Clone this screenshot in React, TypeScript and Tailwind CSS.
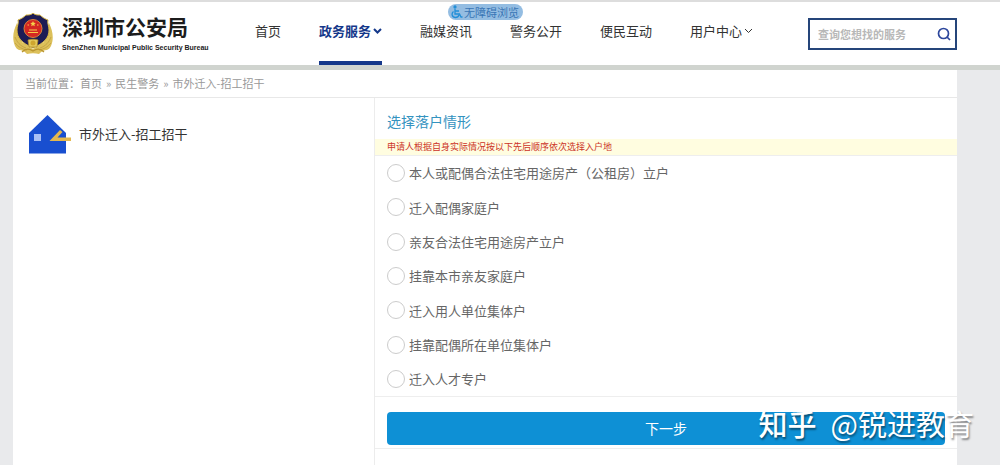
import React from "react";

type NavItem = { label: string; active?: boolean; menu?: boolean };

const NAV: NavItem[] = [
  { label: "首页" },
  { label: "政务服务", active: true, menu: true },
  { label: "融媒资讯" },
  { label: "警务公开" },
  { label: "便民互动" },
  { label: "用户中心", menu: true },
];

const OPTIONS = [
  "本人或配偶合法住宅用途房产（公租房）立户",
  "迁入配偶家庭户",
  "亲友合法住宅用途房产立户",
  "挂靠本市亲友家庭户",
  "迁入用人单位集体户",
  "挂靠配偶所在单位集体户",
  "迁入人才专户",
];

function Emblem() {
  return (
    <svg viewBox="0 0 40 42" className="h-[42px] w-10 shrink-0" aria-hidden="true">
      <path
        d="M4 10C0 18-1 26 2 33c1 2 2 3 4 4 3 0 5 1 8 4 4-1 8-1 12 0 3-3 5-4 8-4 2-1 3-2 4-4 3-7 2-15-2-23l-5 19-11 7-11-7z"
        fill="#dcc05a"
      />
      <path d="M2 24c2 5 5 9 11 11M2 30c3 4 7 6 12 7M38 24c-2 5-5 9-11 11M38 30c-3 4-7 6-12 7" fill="none" stroke="#c6a545" strokeWidth="1" />
      <path
        d="M20 0c2 2 4 2 7 2 2 2 5 4 8 5-1 3 1 6 1 10 0 8-5 13-16 18C9 30 4 25 4 17c0-4 2-7 1-10 3-1 6-3 8-5 3 0 5 0 7-2z"
        fill="#1d1c55"
        stroke="#d5b544"
        strokeWidth="1"
      />
      <circle cx="20" cy="15.500" r="9" fill="#d42722" stroke="#d9843a" strokeWidth="1" />
      <path d="m20 8 .8 1.8 2 .2-1.500 1.300.5 2-1.800-1-1.800 1 .5-2L17.200 10l2-.2z" fill="#f5d24a" />
      <path d="M14.500 12H16M24 12h1.500M16 17h8M15 19.500h10" stroke="#f5c94a" strokeWidth="1.200" />
      <path d="M15 27c2-1 8-1 10 0l-1 7h-8z" fill="#e3c95c" stroke="#b08a22" strokeWidth=".7" />
      <circle cx="20" cy="30" r="2.500" fill="#cfa62f" />
      <path d="M9 39c4-4 8-3 11-1 3-2 7-3 11 1" fill="none" stroke="#b8932f" strokeWidth="1.200" />
    </svg>
  );
}

function Chevron({ bold }: { bold?: boolean }) {
  return (
    <svg viewBox="0 0 9 8" className="h-2 w-[9px]" fill="none" stroke="currentColor" strokeWidth={bold ? 2 : 1} aria-hidden="true">
      <path d="m1 2 3.500 3.500L8 2" />
    </svg>
  );
}

function HouseIcon() {
  return (
    <svg viewBox="0 0 42 40" className="h-10 w-[42px] shrink-0" aria-hidden="true">
      <path d="M0 19 18.500 1 37 19v20.500H0z" fill="#194fd0" />
      <path d="M5 20h7v7H5z" fill="#a9c0f5" />
      <path d="m31 16 2.500 2-5 5.500H42V27H20.500z" fill="#e4b84e" />
    </svg>
  );
}

export default function App() {
  return (
    <div className="relative flex min-h-screen flex-col overflow-hidden bg-[#e9eaec] font-['Noto_Sans_CJK_SC',sans-serif] text-[13px]">
      <header className="relative flex h-[70px] items-start border-t-2 border-b-[5px] border-t-[#dddddd] border-b-[#d0d4cf] bg-white pr-[43px] pl-[13px]">
        <a href="#home" className="flex w-[242px] shrink-0 items-center gap-[9px] pt-[11px]">
          <Emblem />
          <span className="flex flex-col gap-1 whitespace-nowrap text-[#1c1c1c]">
            <span className="text-[21px] leading-6 font-bold">深圳市公安局</span>
            <span className="font-['Liberation_Sans',sans-serif] text-[7px] leading-3 font-bold">ShenZhen Municipal Public Security Bureau</span>
          </span>
        </a>

        <nav className="flex flex-1 gap-[38px] self-stretch">
          {NAV.map((n) => (
            <a
              key={n.label}
              href="#nav"
              className={
                n.active
                  ? "flex items-center gap-[2px] border-b-4 border-[#15388a] pb-px font-bold whitespace-nowrap text-[#15388a]"
                  : "flex items-center gap-[2px] border-b-4 border-transparent pb-px whitespace-nowrap text-[#333333]"
              }
            >
              {n.label}
              {n.menu && <Chevron bold={n.active} />}
            </a>
          ))}
        </nav>

        <form className="mt-4 flex h-8 w-[149px] shrink-0 items-center border-2 border-[#25457a] pr-1 pl-2" onSubmit={(e) => e.preventDefault()}>
          <input
            type="search"
            aria-label="查询您想找的服务"
            placeholder="查询您想找的服务"
            className="w-full min-w-0 flex-1 bg-transparent text-[11px] font-bold outline-none placeholder:text-[#b8b8b8]"
          />
          <button type="submit" aria-label="搜索" className="text-[#2d479c]">
            <svg viewBox="0 0 14 14" className="h-[14px] w-[14px]" fill="none" stroke="currentColor" strokeWidth="1.700" aria-hidden="true">
              <circle cx="6.500" cy="6.500" r="5" />
              <path d="m10 10 3 3" />
            </svg>
          </button>
        </form>

        <a
          href="#accessible"
          className="absolute top-[2px] left-[448px] flex h-4 w-[75px] items-center gap-px rounded-full bg-[#94bde2] pl-[3px] text-[11px] leading-4 whitespace-nowrap text-[#3975b5]"
        >
          <svg viewBox="0 0 12 14" className="h-[14px] w-3" fill="none" stroke="#218fd8" strokeWidth="1.300" aria-hidden="true">
            <circle cx="4" cy="2" r="1" fill="#218fd8" />
            <path d="M4 4v5h4.500l1.500 3h1.500M4 6h4M2.500 6.500C0 8.500 1 12.500 4.500 12.500c2 0 3-1 3.500-2.500" />
          </svg>
          无障碍浏览
        </a>
      </header>

      <main className="mr-[43px] ml-[13px] flex flex-1 flex-col bg-white">
        <div className="flex h-7 items-center border-b border-[#e8e8e8] px-3 text-[11px] text-[#999999]">
          <span>当前位置：</span>
          <a href="#home">首页</a>
          <span className="px-1">»</span>
          <a href="#service">民生警务</a>
          <span className="px-1">»</span>
          <span>市外迁入-招工招干</span>
        </div>

        <div className="flex flex-1">
          <aside className="w-[362px] shrink-0 border-r border-[#ececec] pt-4 pl-4">
            <div className="flex items-center gap-2 text-[#333333]">
              <HouseIcon />
              <span>市外迁入-招工招干</span>
            </div>
          </aside>

          <form className="min-w-0 flex-1" onSubmit={(e) => e.preventDefault()}>
            <h1 className="flex h-[41px] items-center px-3 pt-[6px] text-[14px] text-[#3493bf]">选择落户情形</h1>
            <p className="h-4 bg-[#fffde0] px-3 text-[9px] leading-4 text-[#cc3327]">申请人根据自身实际情况按以下先后顺序依次选择入户地</p>
            <div role="radiogroup" aria-label="选择落户情形" className="grid h-[242px] grid-rows-7 border-y border-[#eeeeee] px-3">
              {OPTIONS.map((o) => (
                <label key={o} className="flex items-center gap-1 text-[#666666]">
                  <input
                    type="radio"
                    name="situation"
                    className="h-[18px] w-[18px] shrink-0 appearance-none rounded-full border border-[#cccccc] bg-white checked:border-[5px] checked:border-[#0e90d5]"
                  />
                  {o}
                </label>
              ))}
            </div>
            <div className="border-b border-[#eeeeee] px-3 pt-[15px] pb-[3px]">
              <button type="submit" className="h-[33px] w-full rounded-sm bg-[#0e90d5] text-[14px] text-white">
                下一步
              </button>
            </div>
          </form>
        </div>
      </main>

      <div className="pointer-events-none absolute right-[26px] bottom-[22px] flex gap-[14px] text-[29px] leading-10 whitespace-nowrap text-white [text-shadow:1px_2px_2px_rgba(0,0,0,0.45)]">
        <span className="font-medium">知乎</span>
        <span>@锐进教育</span>
      </div>
    </div>
  );
}
